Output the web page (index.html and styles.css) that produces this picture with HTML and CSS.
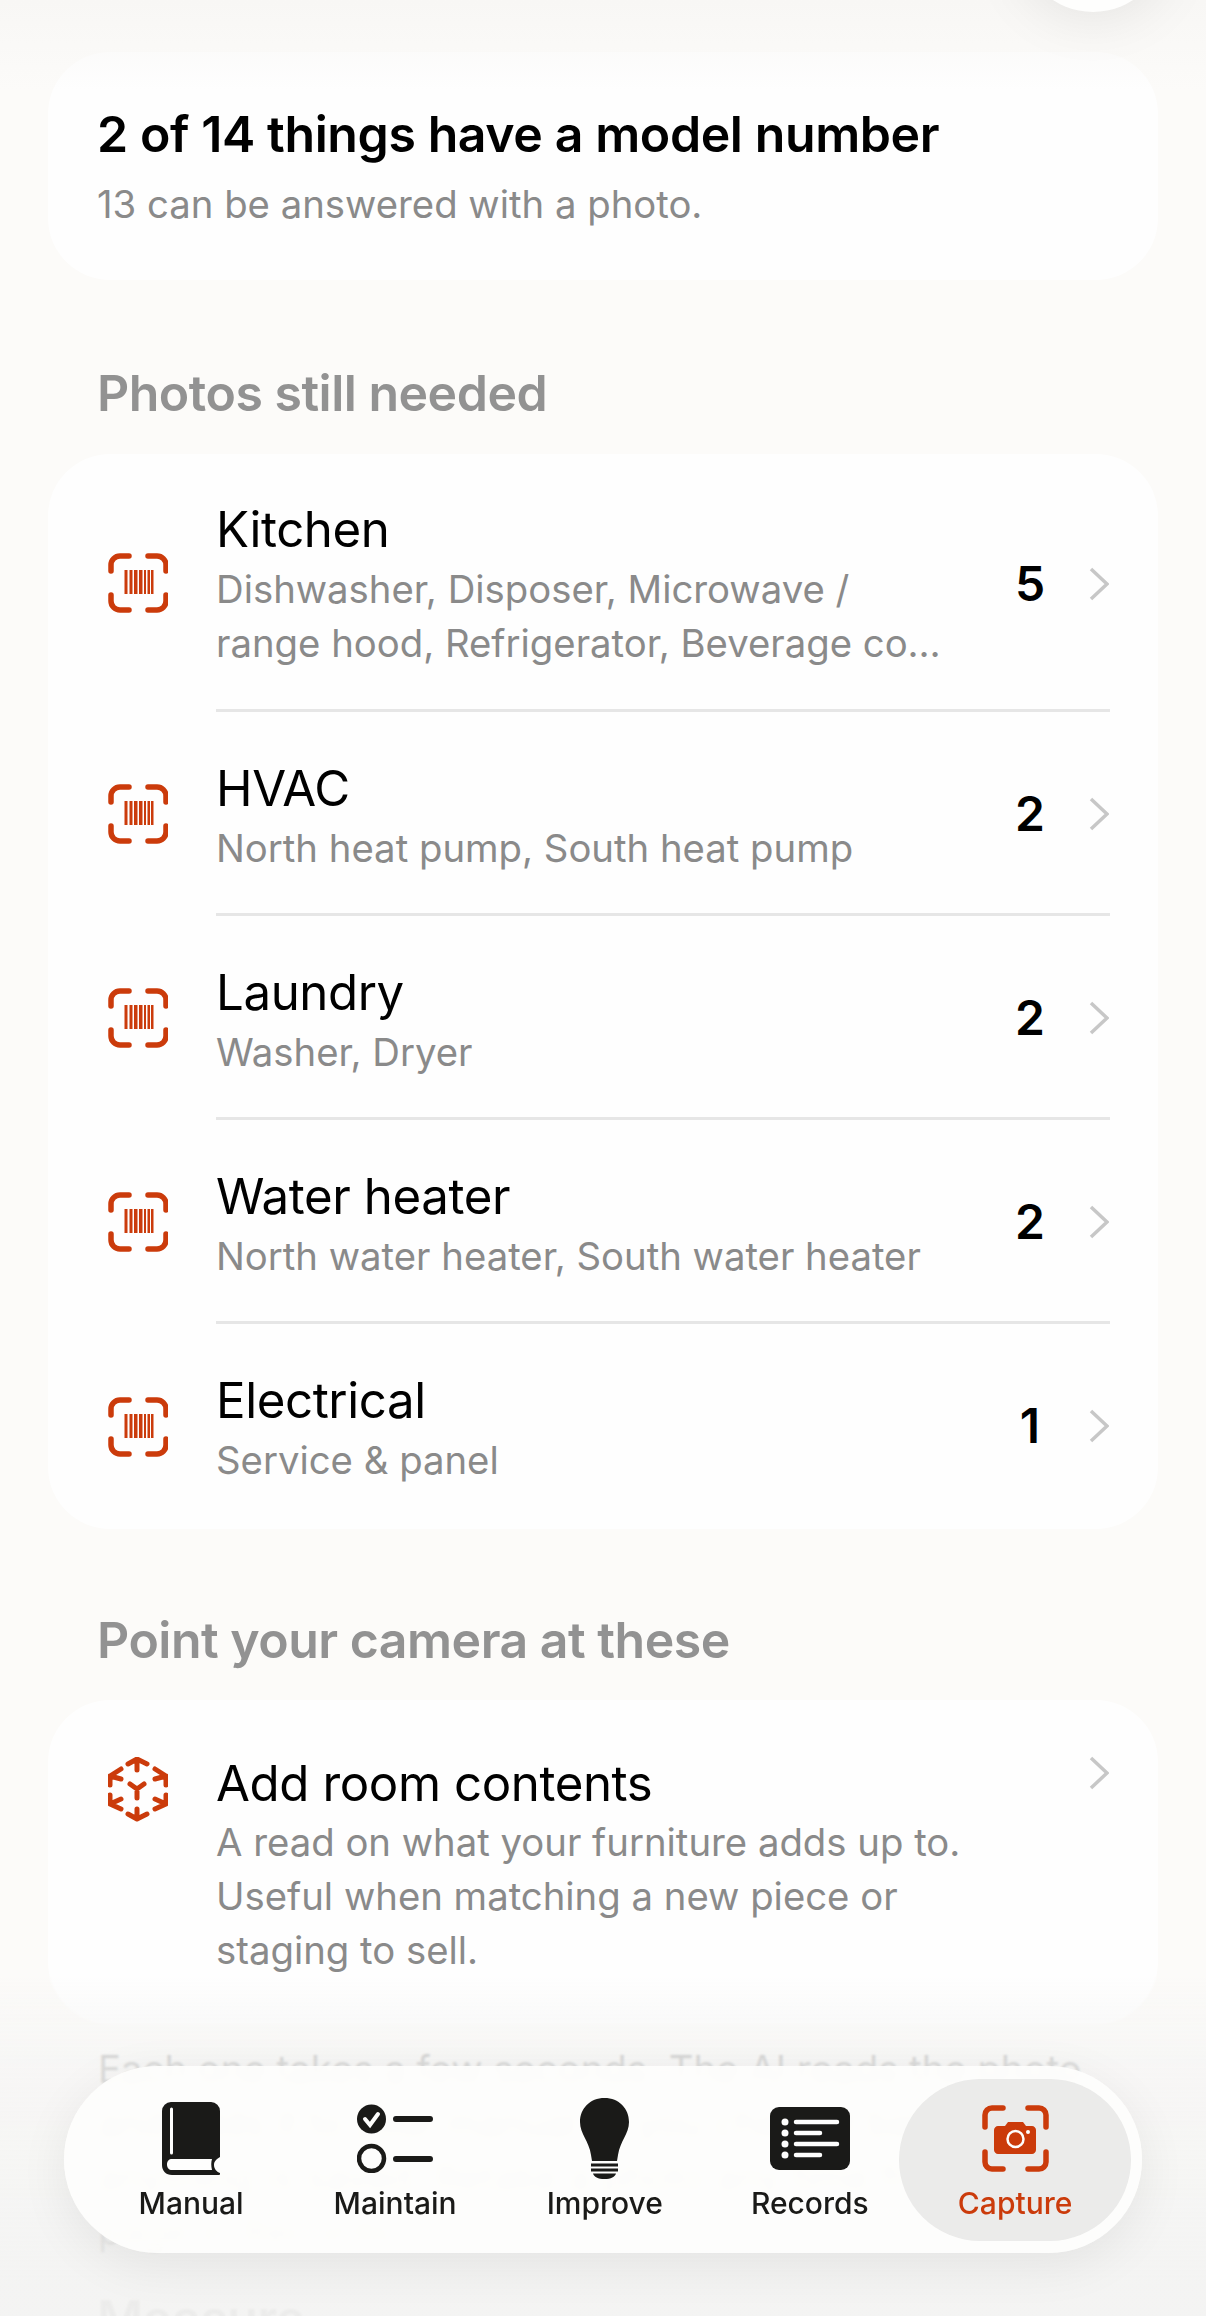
FILE: index.html
```html
<!DOCTYPE html>
<html lang="en">
<head>
    <meta charset="UTF-8">
    <meta name="viewport" content="width=device-width, initial-scale=1.0">
    <title>Capture</title>
    <link rel="stylesheet" href="styles.css">
</head>
<body>
    <div class="screen">
        <main class="content">
            <section class="card summary">
                <h1>2 of 14 things have a model number</h1>
                <p>13 can be answered with a photo.</p>
            </section>

            <h2 class="section-title">Photos still needed</h2>
            <section class="card list">
                <div class="row">
                    <svg class="row-icon" viewBox="0 0 60 60"><use href="#barcode"/></svg>
                    <div class="row-body">
                        <div class="row-text">
                            <div class="row-title">Kitchen</div>
                            <div class="row-sub narrow">Dishwasher, Disposer, Microwave / range hood, Refrigerator, Beverage co…</div>
                        </div>
                        <span class="count">5</span>
                        <svg class="chevron" viewBox="0 0 20 34"><path d="M2 2l16 15L2 32"/></svg>
                    </div>
                </div>
                <div class="row">
                    <svg class="row-icon" viewBox="0 0 60 60"><use href="#barcode"/></svg>
                    <div class="row-body">
                        <div class="row-text">
                            <div class="row-title">HVAC</div>
                            <div class="row-sub">North heat pump, South heat pump</div>
                        </div>
                        <span class="count">2</span>
                        <svg class="chevron" viewBox="0 0 20 34"><path d="M2 2l16 15L2 32"/></svg>
                    </div>
                </div>
                <div class="row">
                    <svg class="row-icon" viewBox="0 0 60 60"><use href="#barcode"/></svg>
                    <div class="row-body">
                        <div class="row-text">
                            <div class="row-title">Laundry</div>
                            <div class="row-sub">Washer, Dryer</div>
                        </div>
                        <span class="count">2</span>
                        <svg class="chevron" viewBox="0 0 20 34"><path d="M2 2l16 15L2 32"/></svg>
                    </div>
                </div>
                <div class="row">
                    <svg class="row-icon" viewBox="0 0 60 60"><use href="#barcode"/></svg>
                    <div class="row-body">
                        <div class="row-text">
                            <div class="row-title">Water heater</div>
                            <div class="row-sub">North water heater, South water heater</div>
                        </div>
                        <span class="count">2</span>
                        <svg class="chevron" viewBox="0 0 20 34"><path d="M2 2l16 15L2 32"/></svg>
                    </div>
                </div>
                <div class="row">
                    <svg class="row-icon" viewBox="0 0 60 60"><use href="#barcode"/></svg>
                    <div class="row-body">
                        <div class="row-text">
                            <div class="row-title">Electrical</div>
                            <div class="row-sub">Service &amp; panel</div>
                        </div>
                        <span class="count">1</span>
                        <svg class="chevron" viewBox="0 0 20 34"><path d="M2 2l16 15L2 32"/></svg>
                    </div>
                </div>
            </section>

            <h2 class="section-title second">Point your camera at these</h2>
            <section class="card list">
                <div class="row room">
                    <svg class="row-icon cube" viewBox="0 0 60 65">
                        <path d="M20 7l9-5 10 5M29 2v11M47 12l11 7v9M47 22l11-3M13 12L2 19v9M13 22L2 19M58 38v9l-11 5M47 42l11 5M2 38v9l11 5M13 42L2 47M20 57l9 5 10-5M29 52v10M22 27l7 5 7-5M29 32v9"/>
                    </svg>
                    <div class="row-body">
                        <div class="row-text">
                            <div class="row-title">Add room contents</div>
                            <div class="row-sub">A read on what your furniture adds up to. Useful when matching a new piece or staging to sell.</div>
                        </div>
                        <svg class="chevron" viewBox="0 0 20 34"><path d="M2 2l16 15L2 32"/></svg>
                    </div>
                </div>
            </section>

            <p class="note">Each one takes a few seconds. The AI reads the photo and adds it to your manual — you check it before anything is saved. Retake a photo any time from its page in Records.</p>
            <h2 class="section-title third">Measure</h2>
        </main>

        <div class="fade-top"></div>
        <div class="fade-bottom"></div>
        <div class="top-button"></div>

        <nav class="tabbar">
            <div class="tab">
                <div class="tab-icon">
                    <svg width="58" height="73" viewBox="0 0 58 73">
                        <path class="ink" d="M9 0h40a9 9 0 0 1 9 9v46c-3 2-6 4-6 8s3 7 6 8v1c0 1-1 1-2 1H10C4 73 0 69 0 63V9a9 9 0 0 1 9-9z"/>
                        <path class="knock" d="M10 57h40c-1 3-1 7 0 11H10c-3 0-5-2-5-5.500S7 57 10 57z"/>
                        <path class="knock-line" d="M9.500 7v44"/>
                    </svg>
                </div>
                <span>Manual</span>
            </div>
            <div class="tab">
                <div class="tab-icon">
                    <svg width="76" height="69" viewBox="0 0 76 69">
                        <circle class="ink" cx="14.500" cy="15" r="14.500"/>
                        <path class="knock-check" d="M8 15l5 6 8-11"/>
                        <circle class="ink-line thin" cx="14.500" cy="54.500" r="12.500"/>
                        <path class="ink-line" d="M39 15h34M39 55h34"/>
                    </svg>
                </div>
                <span>Maintain</span>
            </div>
            <div class="tab">
                <div class="tab-icon">
                    <svg width="49" height="81" viewBox="0 0 49 81">
                        <path class="ink" d="M24.500 0C10 0 0 10.500 0 24c0 12 9 19 11 33l1 6h25l1-6c2-14 11-21 11-33C49 10.500 39 0 24.500 0z"/>
                        <path class="ink" d="M11 65.500h27v3H11zM11 70.500h27v3H11zM13 75.500h23c-1 3.500-5 5.500-11.500 5.500S14 79 13 75.500z"/>
                    </svg>
                </div>
                <span>Improve</span>
            </div>
            <div class="tab before-active">
                <div class="tab-icon">
                    <svg width="80" height="63" viewBox="0 0 80 63">
                        <rect class="ink" width="80" height="63" rx="9"/>
                        <circle class="knock" cx="15" cy="15" r="3.500"/>
                        <circle class="knock" cx="15" cy="26" r="3.500"/>
                        <circle class="knock" cx="15" cy="37" r="3.500"/>
                        <circle class="knock" cx="15" cy="48" r="3.500"/>
                        <path class="knock-list" d="M26 15h41M26 26h24M26 37h41M26 48h24"/>
                    </svg>
                </div>
                <span>Records</span>
            </div>
            <div class="tab active">
                <div class="tab-icon">
                    <svg width="67" height="67" viewBox="0 0 67 67">
                        <path class="accent-line" d="M3 22V10a7 7 0 0 1 7-7h11M46 3h11a7 7 0 0 1 7 7v12M64 47v10a7 7 0 0 1-7 7H46M21 64H10a7 7 0 0 1-7-7V47"/>
                        <path class="accent" d="M16 21h7l3-4h15l3 4h6c2 0 4 2 4 4v20c0 2-2 4-4 4H16c-2 0-4-2-4-4V25c0-2 2-4 4-4z"/>
                        <circle class="lens" cx="33.500" cy="34" r="8"/>
                        <circle class="knock" cx="46" cy="27" r="2"/>
                    </svg>
                </div>
                <span>Capture</span>
            </div>
        </nav>
    </div>

    <!-- shared scan icon -->
    <svg class="defs" width="0" height="0">
        <symbol id="barcode" viewBox="0 0 60 60">
            <path class="scan" d="M3 18v-6a9 9 0 0 1 9-9h9M40 3h9a9 9 0 0 1 9 9v6M58 42v6a9 9 0 0 1-9 9h-9M21 57h-9a9 9 0 0 1-9-9v-6"/>
            <path class="bars" d="M16.500 17h3v24h-3zM21.500 17h3v24h-3zM26 17h3.500v24H26zM31 17h3.500v24H31zM36 17h2v24h-2zM39.500 17h2.500v24h-2.500zM43 17h2.500v24H43z"/>
        </symbol>
    </svg>
</body>
</html>
```

FILE: styles.css
```css
* {
    box-sizing: border-box;
}

body {
    margin: 0;
    background-color: #fcfbf9;
    font-family: Inter, "Liberation Sans", sans-serif;
    color: #000;
}

.screen {
    position: relative;
    width: 1206px;
    height: 2316px;
    overflow: hidden;
}

.content {
    padding: 52px 48px 0;
}

.card {
    background-color: #fefefe;
    border-radius: 62px;
}

.summary {
    height: 228px;
    padding: 52px 49px 0;
}

.summary h1 {
    margin: 0;
    font-size: 50px;
    line-height: 60px;
    font-weight: 600;
    letter-spacing: -0.4px;
}

.summary p {
    margin: 15px 0 0;
    font-size: 38.300px;
    line-height: 50px;
    color: #8a8a8a;
}

.section-title {
    margin: 83px 0 31px 49px;
    font-size: 50px;
    line-height: 60px;
    font-weight: 600;
    letter-spacing: -0.5px;
    color: #929292;
}

.section-title.second {
    margin-top: 81px;
    margin-bottom: 30px;
}

.section-title.third {
    margin-top: 30px;
}

.row {
    display: flex;
    align-items: center;
    padding-left: 60px;
}

.row-icon {
    flex: none;
    width: 60px;
    height: 60px;
    margin-right: 48px;
}

.row-body {
    flex: 1;
    min-width: 0;
    display: flex;
    align-items: center;
    margin-right: 48px;
    padding: 46px 0 38px;
    border-bottom: 3px solid #e6e6e6;
}

.row:first-child .row-body {
    padding-top: 45px;
    padding-bottom: 39px;
}

.row:last-child .row-body {
    padding-bottom: 42px;
    border-bottom: none;
}

.row-text {
    flex: 1;
    min-width: 0;
}

.row-title {
    font-size: 49.200px;
    line-height: 60px;
    letter-spacing: -0.4px;
}

.row-sub {
    margin-top: 3px;
    font-size: 38.300px;
    line-height: 54px;
    color: #8a8a8a;
    max-width: 760px;
}

.narrow {
    max-width: 725px;
}

.count {
    flex: none;
    width: 40px;
    margin: 0 39px 6px 0;
    text-align: center;
    font-size: 48px;
    font-weight: 600;
}

.chevron {
    flex: none;
    width: 20px;
    height: 34px;
    margin: 0 1px 6px 0;
    fill: none;
    stroke: #c7c7c7;
    stroke-width: 3.500;
}

.row:first-child .count,
.row:first-child .chevron {
    margin-bottom: 2px;
}

/* room card has its chevron up top */
.room {
    align-items: flex-start;
}

.list .room .row-body {
    align-items: flex-start;
    padding-top: 53px;
    padding-bottom: 47px;
}

.room .row-icon {
    margin-top: 57px;
    height: 65px;
}

.room .row-sub {
    margin-top: 2px;
}

.room .chevron {
    margin-top: 3px;
}

.cube {
    fill: none;
    stroke: #cb3b0b;
    stroke-width: 5;
    stroke-linecap: round;
    stroke-linejoin: round;
}

.scan {
    fill: none;
    stroke: #cb3b0b;
    stroke-width: 5.500;
    stroke-linecap: round;
}

.bars {
    fill: #cb3b0b;
}

.note {
    margin: 18px 50px 0;
    font-size: 38.300px;
    line-height: 54px;
    color: #8a8a8a;
}

.defs {
    position: absolute;
}

.fade-top {
    position: absolute;
    top: 0;
    left: 0;
    right: 0;
    height: 90px;
    background: linear-gradient(#f8f7f5, rgba(252, 251, 249, 0));
}

.fade-bottom {
    position: absolute;
    left: 0;
    right: 0;
    bottom: 0;
    height: 340px;
    background: linear-gradient(rgba(245, 245, 244, 0), rgba(245, 245, 244, 0.75) 25%, rgba(243, 243, 242, 0.93) 90%);
    backdrop-filter: blur(1px);
}

.top-button {
    position: absolute;
    top: -134px;
    left: 1020px;
    width: 146px;
    height: 146px;
    border-radius: 50%;
    background-color: #fefefd;
    box-shadow: 0 4px 60px rgba(0, 0, 0, 0.09);
}

.tabbar {
    position: absolute;
    top: 2066px;
    left: 64px;
    width: 1078px;
    height: 187px;
    display: flex;
    align-items: center;
    padding: 0 11px 0 29.500px;
    border-radius: 94px;
    background-color: rgba(254, 254, 253, 0.88);
    backdrop-filter: blur(6px);
    box-shadow: 0 12px 50px rgba(0, 0, 0, 0.07);
}

.tab {
    display: flex;
    flex-direction: column;
    align-items: center;
    height: 162px;
    padding: 18px 45px 0;
    font-size: 30px;
    font-weight: 500;
    line-height: 36px;
    color: #1a1a18;
}

.tab.before-active {
    padding-left: 43px;
    padding-right: 30.500px;
}

.tab-icon {
    display: flex;
    align-items: center;
    justify-content: center;
    height: 84px;
    margin-bottom: 4px;
}

.tab.active {
    flex: 1;
    padding-left: 0;
    padding-right: 0;
    border-radius: 81px;
    background-color: #ebebea;
    color: #cb3b0b;
}

.ink {
    fill: #1a1a18;
}

.ink-line {
    fill: none;
    stroke: #1a1a18;
    stroke-width: 6;
    stroke-linecap: round;
}

.ink-line.thin {
    stroke-width: 4.500;
}

.knock {
    fill: #fefefd;
}

.knock-line,
.knock-check,
.knock-list {
    fill: none;
    stroke: #fefefd;
    stroke-width: 3;
    stroke-linecap: round;
}

.knock-check {
    stroke-width: 4;
}

.knock-list {
    stroke-width: 4.500;
}

.accent {
    fill: #cb3b0b;
}

.accent-line {
    fill: none;
    stroke: #cb3b0b;
    stroke-width: 5.500;
    stroke-linecap: round;
}

.lens {
    fill: #cb3b0b;
    stroke: #fefefd;
    stroke-width: 2.500;
}
```
